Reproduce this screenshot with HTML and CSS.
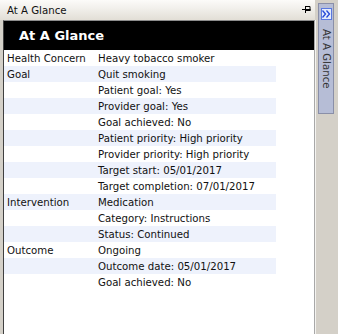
FILE: index.html
```html
<!DOCTYPE html>
<html>
<head>
<meta charset="utf-8">
<link rel="stylesheet" href="styles.css">
</head>
<body>
<div class="app">
  <div class="main">
    <div class="titlebar">
      <span class="title">At A Glance</span>
      <svg class="pin" width="9" height="8" viewBox="0 0 9 8">
        <path d="M0 4.5H3.5M3.5 1V8M4 1.5H8V5.5H4" fill="none" stroke="#000" stroke-width="1"/>
        <path d="M4 5H8.5" stroke="#000" stroke-width="2"/>
      </svg>
    </div>
    <div class="panel">
      <div class="header">At A Glance</div>
      <div class="rows">
        <div class="row"><span class="k">Health Concern</span><span class="v">Heavy tobacco smoker</span></div>
        <div class="row alt"><span class="k">Goal</span><span class="v">Quit smoking</span></div>
        <div class="row"><span class="k"></span><span class="v">Patient goal: Yes</span></div>
        <div class="row alt"><span class="k"></span><span class="v">Provider goal: Yes</span></div>
        <div class="row"><span class="k"></span><span class="v">Goal achieved: No</span></div>
        <div class="row alt"><span class="k"></span><span class="v">Patient priority: High priority</span></div>
        <div class="row"><span class="k"></span><span class="v">Provider priority: High priority</span></div>
        <div class="row alt"><span class="k"></span><span class="v">Target start: 05/01/2017</span></div>
        <div class="row"><span class="k"></span><span class="v">Target completion: 07/01/2017</span></div>
        <div class="row alt"><span class="k">Intervention</span><span class="v">Medication</span></div>
        <div class="row"><span class="k"></span><span class="v">Category: Instructions</span></div>
        <div class="row alt"><span class="k"></span><span class="v">Status: Continued</span></div>
        <div class="row"><span class="k">Outcome</span><span class="v">Ongoing</span></div>
        <div class="row alt"><span class="k"></span><span class="v">Outcome date: 05/01/2017</span></div>
        <div class="row"><span class="k"></span><span class="v">Goal achieved: No</span></div>
      </div>
    </div>
  </div>
  <div class="side">
    <div class="tab">
      <div class="tabbtn">
        <svg width="9" height="8" viewBox="0 0 9 8">
          <path d="M0.5 0.5L3.5 4L0.5 7.5M4.5 0.5L7.5 4L4.5 7.5" fill="none" stroke="#2448d8" stroke-width="1.3"/>
        </svg>
      </div>
      <div class="tablabel">At A Glance</div>
    </div>
  </div>
</div>
</body>
</html>
```

FILE: styles.css
```css
html, body {
  margin: 0;
  padding: 0;
}
body {
  width: 338px;
  height: 334px;
  overflow: hidden;
  background: #d4d0c8;
  font-family: "DejaVu Sans", Tahoma, sans-serif;
  color: #000;
}
.app {
  display: flex;
  height: 334px;
}
.main {
  width: 315px;
  display: flex;
  flex-direction: column;
}
.titlebar {
  height: 20px;
  display: flex;
  align-items: center;
  justify-content: space-between;
  padding: 0 4px 0 7px;
  box-sizing: border-box;
  background: linear-gradient(#fcfbf9, #f2f0ec 40%, #e2ded6);
}
.title {
  font-size: 10.2px;
  color: #111;
}
.pin {
  margin-top: -3px;
}
.panel {
  flex: 1;
  margin-left: 3px;
  background: #fff;
  border-left: 1px solid #404040;
  border-top: 1px solid #8c8c8c;
  border-right: 1px solid #a8a8a8;
  box-shadow: 1px 0 0 #f4f3f0;
}
.header {
  height: 29px;
  background: #000;
  color: #fff;
  font-weight: bold;
  font-size: 13px;
  display: flex;
  align-items: center;
  padding-left: 15px;
}
.rows {
  width: 272px;
}
.row {
  display: flex;
  height: 16px;
  align-items: center;
  font-size: 10.2px;
  color: #111;
}
.row.alt {
  background: #eef2fc;
}
.k {
  width: 91px;
  padding-left: 3px;
}
.side {
  flex: 1;
  padding: 3px 0 0 3px;
}
.tab {
  width: 14px;
  height: 109px;
  background: #b6bdd6;
  border: 1px solid #8a8fa8;
  display: flex;
  flex-direction: column;
  align-items: center;
}
.tabbtn {
  margin-top: 4px;
  width: 11px;
  height: 12px;
  box-sizing: border-box;
  border: 1px solid #5a78e0;
  background: #e4ebfc;
  display: flex;
  align-items: center;
  justify-content: center;
}
.tablabel {
  margin-top: 9px;
  writing-mode: vertical-rl;
  font-size: 10.2px;
  color: #333;
}
```
